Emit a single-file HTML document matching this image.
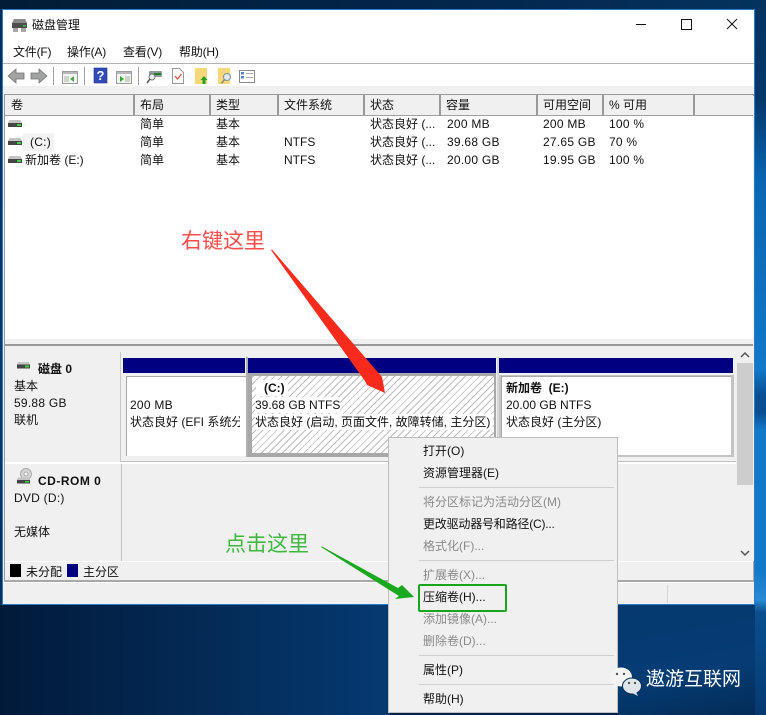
<!DOCTYPE html>
<html lang="zh"><head><meta charset="utf-8"><title>磁盘管理</title>
<style>
html,body{margin:0;padding:0}
body{width:766px;height:715px;overflow:hidden;position:relative;font:12px/16px "Liberation Sans","Noto Sans CJK SC",sans-serif;color:#111;background:#03244a}
div,span,svg{position:absolute}
.t{white-space:nowrap}
.b{font-weight:bold}
.g{color:#8a8a8a}
.n{letter-spacing:.25px}
.mb{letter-spacing:-.2px}
.h{top:95px;height:20px;background:#f0f0f0;border-right:2px solid #999;box-sizing:border-box}
.l{left:0;top:2px;white-space:nowrap}
.sep{left:419px;width:195px;height:1px;background:#d0d0d0}
.m{left:423px;white-space:nowrap}
</style></head><body>
<div style="left:0;top:0;width:766px;height:30px;background:linear-gradient(90deg,#021c36,#03264c 60%,#04335f)"></div>
<div style="left:0;top:9px;width:3px;height:600px;background:linear-gradient(180deg,#04305c,#063a72 60%,#052f5c)"></div>
<div style="left:755px;top:0;width:11px;height:715px;background:linear-gradient(180deg,#04335f 0,#05386a 100px,#0a66b2 180px,#1278c8 370px,#0a4f90 395px,#0a4f90 412px,#1278c8 430px,#1278c8 570px,#2a8ad4 600px,#0a4f90 612px,#053a70 715px)"></div>
<div style="left:0;top:605px;width:390px;height:110px;background:linear-gradient(90deg,#021a3a,#04305f 70%,#053a72)"></div>
<div style="left:618px;top:605px;width:137px;height:110px;background:linear-gradient(170deg,#05396f,#053c74 60%,#032c57)"></div>

<div style="left:2px;top:9px;width:753px;height:596px;box-sizing:border-box;border:1px solid #2a7bc8;background:#f0f0f0;overflow:hidden"></div>
<div style="left:3px;top:10px;width:751px;height:76px;background:#fff"></div>
<div style="left:3px;top:63px;width:751px;height:1px;background:#b4b4b4"></div>

<svg style="left:11px;top:18px" width="17" height="15" viewBox="0 0 17 15"><path d="M3 1h11l2 4H1z" fill="#8a8a8a"/><rect x="1" y="5" width="15" height="5" fill="#4d4d4d"/><rect x="12" y="7" width="3" height="1.500" fill="#3cc03c"/><rect x="2" y="10" width="5" height="4" fill="#a8a8a8"/><rect x="10" y="10" width="5" height="4" fill="#a8a8a8"/></svg>
<span class="t" style="left:32px;top:17px">磁盘管理</span>
<div style="left:636px;top:24px;width:10px;height:1px;background:#111"></div>
<div style="left:681px;top:19px;width:9px;height:9px;border:1px solid #111"></div>
<svg style="left:726px;top:18px" width="12" height="12" viewBox="0 0 12 12"><path d="M1 1l10 10M11 1L1 11" stroke="#111" stroke-width="1" fill="none"/></svg>

<span class="t mb" style="left:13px;top:44px">文件(F)</span>
<span class="t mb" style="left:67px;top:44px">操作(A)</span>
<span class="t mb" style="left:123px;top:44px">查看(V)</span>
<span class="t mb" style="left:179px;top:44px">帮助(H)</span>

<!-- toolbar -->
<svg style="left:0;top:64px" width="270" height="24" viewBox="0 0 270 24">
<path d="M8 12l8-7v4h8v6h-8v4z" fill="#a0a3a0" stroke="#707470" stroke-width=".8"/>
<path d="M47 12l-8-7v4h-8v6h8v4z" fill="#a0a3a0" stroke="#707470" stroke-width=".8"/>
<rect x="53" y="3" width="1" height="18" fill="#a0a0a0"/>
<rect x="62.500" y="7.500" width="15" height="12" fill="#f4f4f4" stroke="#9a9a9a"/><rect x="63" y="8" width="14" height="2" fill="#b8b8b8"/><rect x="64" y="12" width="5" height="6" fill="#cdd5c8"/><path d="M74 12v6l-4-3z" fill="#4ea24e"/>
<rect x="84" y="3" width="1" height="18" fill="#a0a0a0"/>
<rect x="94" y="4" width="13" height="15" fill="#2f4cb8"/><rect x="94" y="4" width="13" height="15" fill="none" stroke="#1f3490" stroke-width=".6"/>
<text x="100.500" y="16" font-family="Liberation Sans" font-weight="bold" font-size="13" fill="#fff" text-anchor="middle">?</text>
<rect x="116.500" y="7.500" width="15" height="12" fill="#f4f4f4" stroke="#9a9a9a"/><rect x="117" y="8" width="14" height="2" fill="#b8b8b8"/><rect x="125" y="12" width="5" height="6" fill="#cdd5c8"/><path d="M120 12v6l4-3z" fill="#2ea82e"/>
<rect x="138" y="3" width="1" height="18" fill="#a0a0a0"/>
<rect x="149" y="7" width="13" height="6" rx="1" fill="#8d9aa0"/><rect x="154" y="9" width="7" height="2" fill="#1f7f1f"/><circle cx="152" cy="13" r="3" fill="#e8eef2" stroke="#777"/><path d="M150 15l-3 4" stroke="#555" stroke-width="1.500"/>
<path d="M172.500 4.500h7l4 4v11h-11z" fill="#fafafa" stroke="#9a9a9a"/><path d="M175 12l2.500 3 4-5" stroke="#d9563c" stroke-width="1.300" fill="none"/>
<rect x="195" y="4" width="12" height="16" fill="#f7d878"/><path d="M204 12l3.500 4h-2v4h-3v-4h-2z" fill="#22a322"/>
<rect x="218" y="4" width="12" height="16" fill="#f7d878"/><circle cx="227" cy="13" r="3.500" fill="#dfeaf2" stroke="#7f8f9a"/><path d="M224.500 15.500l-3 4" stroke="#8a8a7a" stroke-width="1.500"/>
<rect x="239.500" y="6.500" width="15" height="12" fill="#fff" stroke="#8a8a8a"/><rect x="241" y="8" width="3" height="2.500" fill="#5a82c8"/><rect x="241" y="12" width="3" height="2.500" fill="#5a82c8"/><rect x="246" y="9" width="7" height="1" fill="#aaa"/><rect x="246" y="13" width="7" height="1" fill="#aaa"/>
</svg>

<!-- list -->
<div style="left:3px;top:86px;width:751px;height:8px;background:#f0f0f0"></div>
<div style="left:4px;top:94px;width:1px;height:487px;background:#9a9a9a"></div>
<div style="left:5px;top:94px;width:749px;height:2px;background:#999"></div>
<div style="left:5px;top:115px;width:748px;height:224px;background:#fff"></div>
<div class="h" style="left:5px;width:130px"><span class="l" style="left:6px">卷</span></div>
<div class="h" style="left:135px;width:76px"><span class="l" style="left:5px">布局</span></div>
<div class="h" style="left:211px;width:68px"><span class="l" style="left:5px">类型</span></div>
<div class="h" style="left:279px;width:86px"><span class="l" style="left:5px">文件系统</span></div>
<div class="h" style="left:365px;width:76px"><span class="l" style="left:5px">状态</span></div>
<div class="h" style="left:441px;width:97px"><span class="l" style="left:5px">容量</span></div>
<div class="h" style="left:538px;width:66px"><span class="l" style="left:5px">可用空间</span></div>
<div class="h" style="left:604px;width:91px"><span class="l" style="left:5px">% 可用</span></div>
<div class="h" style="left:695px;width:58px;border-right:0"></div>
<div style="left:5px;top:115px;width:748px;height:1px;background:#a0a0a0"></div>

<svg style="left:8px;top:120px" width="14" height="46" viewBox="0 0 14 46"><g id="d"><path d="M1.500 0h11l1.500 3H0z" fill="#c4c4c4"/><rect y="3" width="14" height="4" fill="#454545"/><rect x="9" y="4" width="4" height="2" fill="#3fd13f"/></g><use href="#d" y="18"/><use href="#d" y="36"/></svg>
<div style="left:23px;top:133px;width:31px;height:18px;background:#f3f3f3"></div>
<span class="t n" style="left:30px;top:134px">(C:)</span>
<span class="t" style="left:25px;top:152px">新加卷 (E:)</span>
<span class="t" style="left:140px;top:116px">简单</span><span class="t" style="left:140px;top:134px">简单</span><span class="t" style="left:140px;top:152px">简单</span>
<span class="t" style="left:216px;top:116px">基本</span><span class="t" style="left:216px;top:134px">基本</span><span class="t" style="left:216px;top:152px">基本</span>
<span class="t" style="left:284px;top:134px">NTFS</span><span class="t" style="left:284px;top:152px">NTFS</span>
<span class="t" style="left:370px;top:116px">状态良好 (...</span><span class="t" style="left:370px;top:134px">状态良好 (...</span><span class="t" style="left:370px;top:152px">状态良好 (...</span>
<span class="t n" style="left:447px;top:116px">200 MB</span><span class="t n" style="left:447px;top:134px">39.68 GB</span><span class="t n" style="left:447px;top:152px">20.00 GB</span>
<span class="t n" style="left:543px;top:116px">200 MB</span><span class="t n" style="left:543px;top:134px">27.65 GB</span><span class="t n" style="left:543px;top:152px">19.95 GB</span>
<span class="t n" style="left:609px;top:116px">100 %</span><span class="t n" style="left:609px;top:134px">70 %</span><span class="t n" style="left:609px;top:152px">100 %</span>

<!-- splitter -->
<div style="left:5px;top:339px;width:748px;height:5px;background:#f0f0f0"></div>
<div style="left:5px;top:344px;width:748px;height:2px;background:#999"></div>

<!-- disk 0 -->
<div style="left:5px;top:352px;width:115px;height:110px;background:#f0f0f0;border-right:1px solid #c8c8c8;border-bottom:1px solid #c8c8c8"></div>
<svg style="left:17px;top:362px" width="13" height="7" viewBox="0 0 13 7"><path d="M1 0h11l1 2.500H0z" fill="#c4c4c4"/><rect y="2.500" width="13" height="4" fill="#454545"/><rect x="8" y="3.500" width="4" height="2" fill="#3fd13f"/></svg>
<span class="t b" style="left:38px;top:361px">磁盘 0</span>
<span class="t" style="left:14px;top:378px">基本</span>
<span class="t n" style="left:14px;top:395px">59.88 GB</span>
<span class="t" style="left:14px;top:412px">联机</span>

<div style="left:121px;top:352px;width:615px;height:110px;background:#f0f0f0"></div>
<div style="left:123px;top:358px;width:122px;height:15px;background:#000080"></div>
<div style="left:248px;top:358px;width:248px;height:15px;background:#000080"></div>
<div style="left:499px;top:358px;width:234px;height:15px;background:#000080"></div>
<div style="left:246px;top:357px;width:2px;height:100px;background:#b0b0b0"></div>
<div style="left:497px;top:357px;width:2px;height:100px;background:#d8d8d8"></div>
<div style="left:121px;top:461px;width:615px;height:1px;background:#c0c0c0"></div>

<div style="left:126px;top:376px;width:120px;height:80px;background:#fff;border-top:1px solid #a8a8a8;border-left:1px solid #a8a8a8;box-sizing:border-box;overflow:hidden"></div>
<span class="t n" style="left:130px;top:397px">200 MB</span>
<div style="left:130px;top:414px;width:110px;height:16px;overflow:hidden;white-space:nowrap">状态良好 (EFI 系统分区)</div>

<div style="left:248px;top:373px;width:248px;height:84px;background:#a8a8a8"></div>
<div style="left:252px;top:376px;width:242px;height:77px;background:repeating-linear-gradient(-45deg,#fff 0,#fff 4px,#bcbcbc 4px,#bcbcbc 5px)"></div>
<span class="t b" style="left:256px;top:380px;background:#fff;padding:0 3px 0 8px">(C:)</span>
<span class="t" style="left:255px;top:397px;background:#fff">39.68 GB NTFS</span>
<div style="left:255px;top:414px;width:238px;height:16px;overflow:hidden;white-space:nowrap;background:#fff">状态良好 (启动, 页面文件, 故障转储, 主分区)</div>

<div style="left:499px;top:375px;width:235px;height:82px;background:#c4c4c4"></div>
<div style="left:501px;top:376px;width:230px;height:79px;box-sizing:border-box;background:#fff;border-top:1px solid #a8a8a8;border-left:1px solid #a8a8a8"></div>
<span class="t b" style="left:506px;top:380px">新加卷 &nbsp;(E:)</span>
<span class="t" style="left:506px;top:397px">20.00 GB NTFS</span>
<span class="t" style="left:506px;top:414px">状态良好 (主分区)</span>

<!-- cdrom -->
<div style="left:5px;top:464px;width:115px;height:97px;background:#f0f0f0"></div>
<div style="left:121px;top:464px;width:1px;height:97px;background:#c4c4c4"></div>
<div style="left:5px;top:462px;width:731px;height:2px;background:#fff"></div>
<svg style="left:17px;top:468px" width="15" height="18" viewBox="0 0 15 18"><circle cx="9" cy="6" r="5.500" fill="#d4d4d4" stroke="#999" stroke-width=".7"/><circle cx="9" cy="6" r="2" fill="#f4f4f4" stroke="#888" stroke-width=".6"/><path d="M1 9.500h11l1 2.500H0z" fill="#c4c4c4"/><rect y="12" width="13" height="3.500" fill="#454545"/><rect x="8" y="13" width="4" height="1.500" fill="#3fd13f"/></svg>
<span class="t b" style="left:38px;top:473px;letter-spacing:.5px">CD-ROM 0</span>
<span class="t n" style="left:14px;top:490px">DVD (D:)</span>
<span class="t" style="left:14px;top:524px">无媒体</span>

<!-- scrollbar -->
<div style="left:736px;top:347px;width:17px;height:214px;background:#f0f0f0"></div>
<div style="left:737px;top:363px;width:16px;height:122px;background:#cdcdcd"></div>
<svg style="left:739px;top:351px" width="12" height="9" viewBox="0 0 12 9"><path d="M2 6l4-4 4 4" stroke="#555" stroke-width="1.500" fill="none"/></svg>
<svg style="left:739px;top:548px" width="12" height="9" viewBox="0 0 12 9"><path d="M2 3l4 4 4-4" stroke="#555" stroke-width="1.500" fill="none"/></svg>

<!-- legend -->
<div style="left:5px;top:561px;width:748px;height:1px;background:#fff"></div>
<div style="left:10px;top:564px;width:11px;height:13px;background:#000"></div>
<span class="t" style="left:26px;top:564px">未分配</span>
<div style="left:67px;top:564px;width:11px;height:13px;background:#000080"></div>
<span class="t" style="left:83px;top:564px">主分区</span>
<div style="left:4px;top:580px;width:750px;height:2px;background:#a8a8a8"></div>
<div style="left:753px;top:561px;width:1px;height:20px;background:#a8a8a8"></div>
<div style="left:3px;top:582px;width:751px;height:1px;background:#fff"></div>
<div style="left:667px;top:585px;width:1px;height:18px;background:#d4d4d4"></div>

<!-- red annotation -->
<span class="t" style="left:181px;top:229px;font-size:21px;line-height:26px;color:#fb4b4b">右键这里</span>
<svg style="left:0;top:0;width:766px;height:715px" viewBox="0 0 766 715"><path d="M271 250L272 249.500 382 377 385 393 367 385 365 381z" fill="#f72a1c"/></svg>

<!-- context menu -->
<div style="left:388px;top:437px;width:230px;height:276px;box-sizing:border-box;background:#f0f0f0;border:1px solid #bdbdbd"></div>
<span class="t m" style="top:443px">打开(O)</span>
<span class="t m" style="top:465px">资源管理器(E)</span>
<div class="sep" style="top:487px"></div>
<span class="t m g" style="top:494px">将分区标记为活动分区(M)</span>
<span class="t m mb" style="top:516px">更改驱动器号和路径(C)...</span>
<span class="t m g" style="top:538px">格式化(F)...</span>
<div class="sep" style="top:560px"></div>
<span class="t m g" style="top:567px">扩展卷(X)...</span>
<span class="t m" style="top:589px">压缩卷(H)...</span>
<span class="t m g" style="top:611px">添加镜像(A)...</span>
<span class="t m g" style="top:633px">删除卷(D)...</span>
<div class="sep" style="top:655px"></div>
<span class="t m" style="top:662px">属性(P)</span>
<div class="sep" style="top:684px"></div>
<span class="t m" style="top:691px">帮助(H)</span>
<div style="left:418px;top:584px;width:89px;height:28px;box-sizing:border-box;border:2px solid #17a51d;border-radius:2px"></div>

<!-- green annotation -->
<span class="t" style="left:225px;top:532px;font-size:21px;line-height:26px;color:#3fb83f">点击这里</span>
<svg style="left:0;top:0;width:766px;height:715px" viewBox="0 0 766 715"><path d="M321 547L322 546.500 398 588 402 585 414 597 395 599 399 596z" fill="#1aa81f"/></svg>

<!-- watermark -->
<svg style="left:608px;top:666px" width="36" height="32" viewBox="0 0 36 32"><ellipse cx="13" cy="11" rx="11" ry="9.500" fill="#f2f4f5"/><path d="M6 17l-1 6 6-4z" fill="#f2f4f5"/><ellipse cx="24" cy="20" rx="9.500" ry="8" fill="#dfe6ea" stroke="#0a2a52" stroke-width="1"/><path d="M28 26l2 4-6-3z" fill="#dfe6ea"/><circle cx="9" cy="8" r="1.200" fill="#555"/><circle cx="16" cy="8" r="1.200" fill="#555"/><circle cx="21" cy="17" r="1.100" fill="#444"/><circle cx="27" cy="17" r="1.100" fill="#444"/></svg>
<span class="t" style="left:646px;top:667px;font-size:19px;line-height:26px;color:#fff">遨游互联网</span>
</body></html>
